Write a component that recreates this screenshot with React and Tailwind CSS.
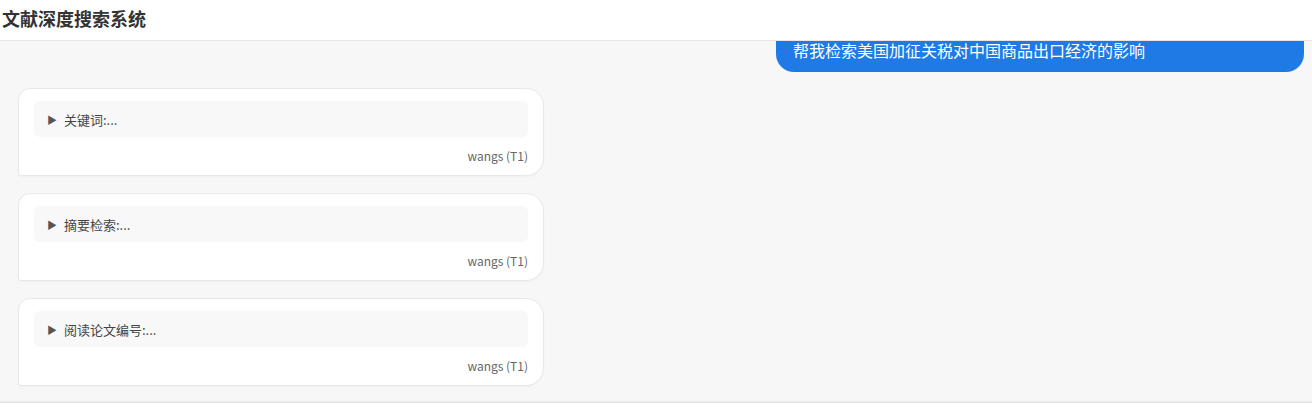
import React from "react";

const font = { fontFamily: '"Noto Sans CJK SC", "Noto Sans", sans-serif' };

function Card({ label }) {
  return (
    <div className="w-[526px] h-[88px] bg-white border border-[#e8e8e8] rounded-[18px] rounded-tl-[12px] rounded-bl-[3px] px-[15px] pt-[12px] shadow-[0_1px_2px_rgba(0,0,0,0.03)]">
      <div className="h-[36px] bg-[#f8f8f8] rounded-[6px] flex items-center pl-[13px] pt-[1px] text-[13px] text-[#444]">
        <span className="text-[10px] text-[#555] mr-[7px]">▶</span>
        <span>{label}</span>
      </div>
      <div className="text-right text-[12px] text-[#666] mt-[11px] leading-[16px]">wangs (T1)</div>
    </div>
  );
}

export default function App() {
  return (
    <div style={font} className="w-[1312px] h-[408px] flex flex-col bg-white overflow-hidden">
      <header className="h-[41px] shrink-0 bg-white border-b border-[#e5e5e5] flex items-center pl-[2px] relative z-10">
        <h1 className="text-[18px] font-bold text-[#333] leading-none -mt-[4px]">文献深度搜索系统</h1>
      </header>
      <main className="h-[361px] shrink-0 bg-[#f7f7f7] overflow-hidden border-b border-[#eeeeee]">
        <div className="-mt-[17px] flex flex-col">
          <div className="flex justify-end pr-[8px]">
            <div className="w-[528px] h-[48px] bg-[#1f7ae6] rounded-[18px] text-white text-[16px] leading-[20px] flex items-center pl-[17px] pt-[3px]">
              帮我检索美国加征关税对中国商品出口经济的影响
            </div>
          </div>
          <div className="flex flex-col gap-[17px] pl-[18px] mt-[16px]">
            <Card label="关键词:..." />
            <Card label="摘要检索:..." />
            <Card label="阅读论文编号:..." />
          </div>
        </div>
      </main>
      <div className="flex-1 bg-white border-t border-[#e2e2e2]" />
    </div>
  );
}
